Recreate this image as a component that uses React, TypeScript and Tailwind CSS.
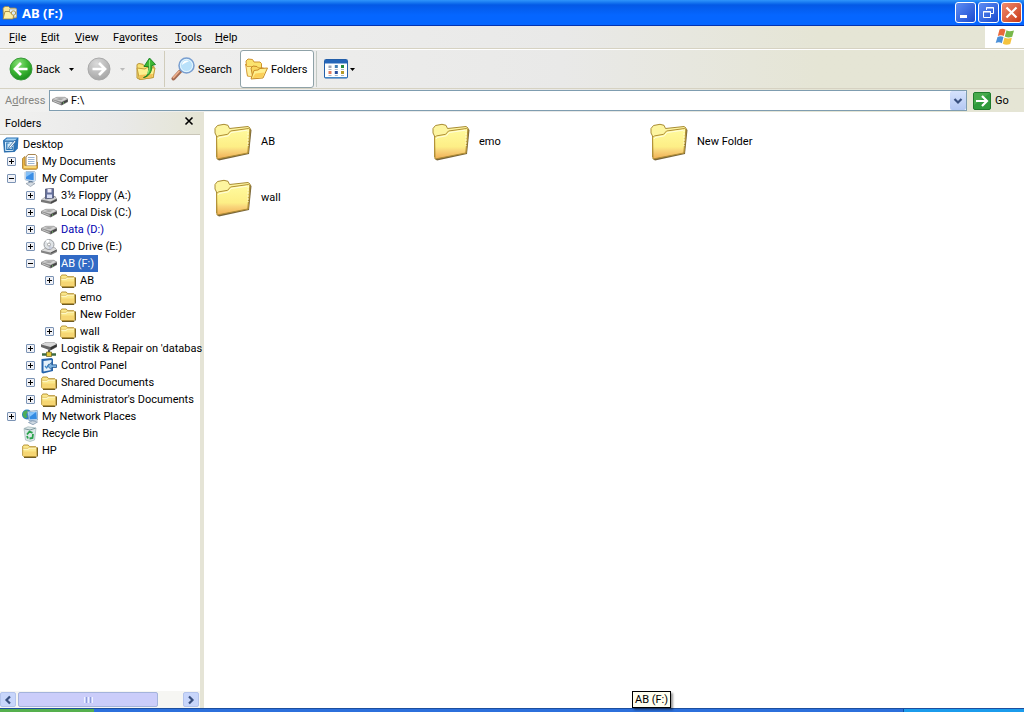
import { useState, type ReactNode } from "react";

type IconProps = { className?: string };

const SmallFolder = () => (
  <svg viewBox="0 0 16 16" className="size-4 shrink-0">
    <path d="M15.500 4.500V13l-1.500 1.500H2" fill="none" stroke="#6f5c24" />
    <path d="M.700 12.500V3.200L1.900 2h4.300l1.400 1.700h6.200l1 1V12.500l-1 1H1.700z" fill="#fbe88c" stroke="#b08a28" strokeWidth=".9" />
    <path d="M1.200 8.500h13v4l-.7.600H1.900l-.7-.6z" fill="#f3cf68" opacity=".7" />
    <path d="M1.300 6.200h4.700l1.500-1.200h6.500" fill="none" stroke="#fffcd6" strokeWidth="1.100" />
    <path d="M1.300 5.300h4.500l1.500-1h6.500" fill="none" stroke="#c8a040" strokeWidth=".5" />
  </svg>
);

const LargeFolder = () => (
  <svg viewBox="0 0 38 38" className="size-[38px] shrink-0">
    <defs>
      <linearGradient id="lf" x1="0" y1="0" x2="0" y2="1">
        <stop offset="0" stopColor="#fffb9e" />
        <stop offset=".6" stopColor="#fdee86" />
        <stop offset=".72" stopColor="#f9d77c" />
        <stop offset="1" stopColor="#f0ae54" />
      </linearGradient>
    </defs>
    <path d="M36 5.500 37.500 7 35 31 5 37.500 3 36z" fill="#77643a" />
    <path d="M2.500 34V13L1 10V5.500L3.500 2.500 10 1.300l4 1L15.500 5.500 34 3.500l2 1.500v4L34 30z" fill="#fdf5a0" stroke="#a98c34" />
    <path d="M3 36 2.600 14.500l2-1.600 9-1.600L16.500 8l18-2.500 1.300 1.200L33.800 30z" fill="url(#lf)" stroke="#b08e36" />
    <path d="M4 16l1-1.500 9.500-1.700L17 9.500l16-2.300" fill="none" stroke="#fffde0" />
    <path d="M34 7v16" stroke="#fffbd0" strokeDasharray="2 1" />
  </svg>
);

const DriveIcon = () => (
  <svg viewBox="0 0 16 16" className="size-4 shrink-0">
    <path d="M0 6.500 5 4h7.500L16 6v3l-6.500 3.500L0 8.500z" fill="#858585" />
    <path d="M.3 6.300 5 4.200h7.500L15.700 6 9.500 9z" fill="#d4d4d4" stroke="#999" strokeWidth=".5" />
    <path d="M3 6.300l4-1.200 5 .3-3 1.800z" fill="#a7a7a7" />
    <path d="M9.500 9.500 15.600 6.400V8.600l-6 3.300z" fill="#444" />
    <path d="M1 7.600l7.500 2.900" stroke="#c9c9c9" />
    <path d="M11 10.200l1-.5" stroke="#7de070" />
  </svg>
);

const FloppyIcon = () => (
  <svg viewBox="0 0 16 16" className="size-4 shrink-0">
    <path d="M0 12l5-4h9l2 3v2l-6 3-10-2z" fill="#777" />
    <path d="M.500 11.500 5 8.500h8.500l2 2-6 3z" fill="#d2d2d2" />
    <path d="M10 14l5.500-2.700v1.400L10 15.400z" fill="#444" />
    <path d="M4.500 1 12.500.5v9.500l-8 .8z" fill="#65709b" stroke="#454b67" strokeWidth=".7" />
    <path d="M6.500 1h4v3.500h-4z" fill="#ece9f7" />
    <path d="M6 6.500h5V10H6z" fill="#d8def5" />
  </svg>
);

const CdIcon = () => (
  <svg viewBox="0 0 16 16" className="size-4 shrink-0">
    <path d="M0 11.500 5 8.500h9l2 2.500v2l-6 3-10-2.500z" fill="#848484" />
    <path d="M.500 11.500 5 9h8.500l2 1.500-6 3z" fill="#dcdcdc" />
    <circle cx="8" cy="5.500" r="5" fill="#dfe3e6" stroke="#85898f" strokeWidth=".8" />
    <path d="M8 5.500 4.500 2A5 5 0 0 1 8 .8z" fill="#fff" />
    <path d="M8 5.500 11.500 9A5 5 0 0 1 8 10z" fill="#c8cddd" />
    <circle cx="8" cy="5.500" r="1.500" fill="#fff" stroke="#888" strokeWidth=".7" />
    <path d="M10 14l5.500-2.700" stroke="#4c4c4c" />
  </svg>
);

const NetDriveIcon = () => (
  <svg viewBox="0 0 16 16" className="size-4 shrink-0">
    <path d="M0 3.500 5 1h7.500L16 3v3l-6.500 3.500L0 6z" fill="#666" />
    <path d="M.3 3.500 5 1.300h7.500L15.700 3 9.500 6z" fill="#d9d9d9" />
    <path d="M9.500 6.500 15.600 3.400v2.200l-6 3.300z" fill="#333" />
    <path d="M8 9v3" stroke="#555" strokeWidth="2" />
    <path d="M1 13.500h14" stroke="#3e6b42" strokeWidth="2.500" />
    <path d="M5.500 11h5v4.500h-5z" fill="#e3c93a" stroke="#6b6224" strokeWidth=".7" />
  </svg>
);

const DesktopIcon = () => (
  <svg viewBox="0 0 16 16" className="size-4 shrink-0">
    <path d="M0 3.500 3.500.500h12L14.800 11.500 11.500 15 1 15.500z" fill="#2b74b8" />
    <path d="M1.300 4.300h10l-.5 10-9 .3z" fill="#d3ebfb" stroke="#2a6caa" />
    <path d="M1.500 3.500 4 1.500h10L12 3.500z" fill="#a6d3f2" />
    <path d="M6.500 6H3.800v6.500h5.500V10" fill="none" stroke="#2673b6" strokeWidth="1.200" />
    <path d="M6 10l5.500-6.500 1.500 1L7.500 11 5.500 11.500z" fill="#fff" stroke="#23619b" strokeWidth=".8" />
  </svg>
);

const DocumentsIcon = () => (
  <svg viewBox="0 0 16 16" className="size-4 shrink-0">
    <path d="M.500 4.500 3 2.500V11h10l2.500-3V14l-1 1.300H1.500l-1-1z" fill="#e9b444" stroke="#a87b25" strokeWidth=".8" />
    <path d="M4 3 6 .500h7.500l1.300 1.500V11l-1 1H4z" fill="#fff" stroke="#a78551" />
    <path d="M6 3.500h6.500M6 5.500h6.500M6 7.500h6.500M6 9.500h6.500" stroke="#9db5d4" />
    <path d="M2 13h12" stroke="#ffe58a" strokeWidth="1.500" />
  </svg>
);

const ComputerIcon = () => (
  <svg viewBox="0 0 16 16" className="size-4 shrink-0">
    <path d="M3 1.500 4 .500h8.500l.8 1V9.500l-1 1-8-1.200L3 8.500z" fill="#e3edf7" stroke="#8da9c7" strokeWidth=".7" />
    <path d="M4 1.500h7.700v7.700L4 8.300z" fill="#3b8ee6" />
    <path d="M4 1.500h7L4 6z" fill="#83c0f7" />
    <path d="M6.500 10h4v2h-4z" fill="#5d7898" />
    <path d="M4 12.500 9 11l4 1.500-4.500 3z" fill="#d4dbe2" stroke="#8c9aa9" strokeWidth=".7" />
  </svg>
);

const ControlPanelIcon = () => (
  <svg viewBox="0 0 16 16" className="size-4 shrink-0">
    <path d="M.500 1 10.500 0 12 1v12L2 15.500l-1.500-1z" fill="#2563ab" />
    <path d="M2.500 3 10.500 2v10L2.500 13.500z" fill="#e4f0fa" />
    <path d="M4 8l1.700 2 2.300-4" fill="none" stroke="#3c87ca" strokeWidth="1.300" />
    <path d="M6.500 8l4-3.500.3 2.300H15.500V9.500h-4.700l-.3 2.300z" fill="#7eb4e2" stroke="#24578f" strokeWidth=".8" />
  </svg>
);

const NetworkIcon = () => (
  <svg viewBox="0 0 16 16" className="size-4 shrink-0">
    <circle cx="5" cy="5.500" r="5" fill="#2c83c8" />
    <path d="M1.500 2.500 5 1l1.500 2L4 5.500 5.500 8 3 9.500.500 6z" fill="#4cae59" />
    <path d="M5.500 2.500 15.300 1.500l.5 9.500-8.800.7z" fill="#dceaf7" stroke="#6c8eb0" strokeWidth=".7" />
    <path d="M6.700 3.500l7.700-.8.500 7.300-7.200.6z" fill="#348ce3" />
    <path d="M6.700 3.500l7.700-.8L7.500 8z" fill="#86c5fb" />
    <path d="M6.500 13.500l4-1.700 5 1.200-4.500 2.700z" fill="#cfd9e2" stroke="#7891a9" strokeWidth=".7" />
  </svg>
);

const RecycleIcon = () => (
  <svg viewBox="0 0 16 16" className="size-4 shrink-0">
    <path d="M2 2.500 6 .800l8 1.200L12.500 14 8 15.500 3.500 14z" fill="#dce7e8" stroke="#9fb4b8" strokeWidth=".7" />
    <path d="M2.500 2.800l5.500 1.200 5.500-1.800" fill="none" stroke="#7c979c" />
    <path d="M5 8.500 7.500 5.500l3 1.300M11 8l-.5 4-3 .5M6 12.500 5 10" fill="none" stroke="#29a24a" strokeWidth="1.800" />
  </svg>
);

const TitleFolder = () => (
  <svg viewBox="0 0 16 16" className="size-4 shrink-0">
    <path d="M1 3l2-1.500h3.500L8 3h5.500l1 1v9H1.500z" fill="#f9e79a" stroke="#94844c" strokeWidth=".8" />
    <path d="M7.500 4h7v8h-7z" fill="#e4eef8" stroke="#a4a494" strokeWidth=".7" />
    <path d="M1 14 3 6.500h4.500L8.500 8h3.500L11 14z" fill="#fdf0a7" stroke="#9b7b34" strokeWidth=".8" />
    <circle cx="11.500" cy="8" r="2.200" fill="#d9ecf8" stroke="#b79a4c" />
  </svg>
);

const UpFolder = () => (
  <svg viewBox="0 0 22 24" className="h-6 w-[22px]">
    <path d="M2 7.500l2-1 4 .8 1.500 2L17 8.500l2 1-.5 11L5 22.500 2 21z" fill="#f7e173" stroke="#bb9536" />
    <path d="M2 11l8 1 2-1.500 8 .5-2 9.500L4.500 22.500z" fill="#fdf08e" stroke="#c49c3a" />
    <path d="M4 18l14-1-.8 3L5 22z" fill="#f2bf54" />
    <path d="M8.500 20.500c4-1 5.500-5 5-11H9L14.500 1 20.500 7.500l-3.700 1c.5 6-3 11.300-8.300 12z" fill="#3cb734" stroke="#188022" strokeWidth=".9" />
    <path d="M14.500 3v7c0 3-.8 5-2 7" fill="none" stroke="#8fe37b" strokeWidth="1.100" />
  </svg>
);

const SearchIcon = () => (
  <svg viewBox="0 0 24 24" className="size-6">
    <path d="M2.500 21.500 9 14.500" stroke="#a46b52" strokeWidth="4" strokeLinecap="round" />
    <path d="M2.500 20.500 8 14.500" stroke="#eeb08c" strokeWidth="1.800" strokeLinecap="round" />
    <circle cx="15.500" cy="8.500" r="7.500" fill="#cdeafb" stroke="#7a9fd0" strokeWidth="1.500" />
    <circle cx="15.500" cy="8.500" r="6" fill="#b9e1fa" stroke="#eefaff" strokeWidth=".8" />
    <path d="M11 8a4.500 4.500 0 0 1 7-3.700C15.500 5 12.500 7 11 8z" fill="#fff" />
  </svg>
);

const FoldersIcon = () => (
  <svg viewBox="0 0 24 22" className="h-[22px] w-6">
    <path d="M2 3 4 1l4.500.5L10 4h6l1.500 1.500v9L3.500 18z" fill="#fbe36e" stroke="#d0942e" />
    <path d="M1.500 6l2 12 5 1L12 8.500H3z" fill="#fff09a" stroke="#d0942e" strokeWidth=".8" />
    <path d="M7 10l2-2 4 .5 1.500 1.500h5l.5 2-1.500 7L9 20.500z" fill="#f9d75f" stroke="#c98c28" />
    <path d="M7 21 10 12.500l4-.5 2-1.500 7.500-.5-4.500 10z" fill="#fff08e" stroke="#c98c28" />
    <path d="M8.500 20l3-4.500 9-1-2 4.700z" fill="#fbcf59" />
  </svg>
);

const ViewsIcon = () => (
  <svg viewBox="0 0 24 20" className="h-5 w-6">
    <rect x=".5" y=".5" width="23" height="18.500" rx="1" fill="#fff" stroke="#245fa9" />
    <path d="M1 1h22v3.500H1z" fill="#2565b8" />
    <path d="M1 18.500h22" stroke="#3f86c8" />
    <path d="M4.500 6.500h3V9h-3z" fill="#9ea5b6" />
    <path d="M4.500 12h3v3h-3z" fill="#e07b5e" />
    <path d="M10.800 6h3v3h-3z" fill="#427eb5" />
    <path d="M10.800 12h3v3h-3z" fill="#284d9c" />
    <path d="M17 6h3v3h-3z" fill="#268b3d" />
    <path d="M17 12h3v3h-3z" fill="#b59a28" />
    <path d="M4.500 10.500h3M10.800 10.500h3M17 10.500h3M4.500 16.500h3M10.800 16.500h3M17 16.500h3" stroke="#aab5c4" />
  </svg>
);

const BackIcon = () => (
  <svg viewBox="0 0 24 24" className="size-6">
    <defs>
      <radialGradient id="bk" cx=".4" cy=".25" r=".8">
        <stop offset="0" stopColor="#8ae07a" />
        <stop offset=".5" stopColor="#3fb935" />
        <stop offset="1" stopColor="#168a1b" />
      </radialGradient>
    </defs>
    <circle cx="12" cy="12" r="11" fill="url(#bk)" stroke="#3b9a3c" />
    <path d="M18.500 12H7M12 6 6 12l6 6" fill="none" stroke="#fff" strokeWidth="2.700" />
  </svg>
);

const ForwardIcon = () => (
  <svg viewBox="0 0 24 24" className="size-6">
    <defs>
      <radialGradient id="fw" cx=".4" cy=".25" r=".8">
        <stop offset="0" stopColor="#dadada" />
        <stop offset="1" stopColor="#a3a3a3" />
      </radialGradient>
    </defs>
    <circle cx="12" cy="12" r="11" fill="url(#fw)" stroke="#aaa" />
    <path d="M5.500 12H17M12 6l6 6-6 6" fill="none" stroke="#fff" strokeWidth="2.700" />
  </svg>
);

const GoIcon = () => (
  <svg viewBox="0 0 18 18" className="size-[18px]">
    <rect x=".5" y=".5" width="17" height="17" rx="1.500" fill="#2f9a3c" stroke="#1f7b2c" />
    <path d="M1 1h16L1 13z" fill="#56b657" opacity=".6" />
    <path d="M3 9h11M9 4l5 5-5 5" fill="none" stroke="#fff" strokeWidth="2.200" />
  </svg>
);

const WindowsFlag = () => (
  <svg viewBox="0 0 20 18" className="h-[18px] w-5">
    <path d="M4.500 1.500C6.500.500 8.500.500 10.500 1.800L8.800 8C7 7 5 7 2.800 8z" fill="#e9683a" />
    <path d="M11.500 2.300c2 1.200 4 1.200 7.500.2L17.200 8.700c-2.700 1.100-5 1-7.400-.2z" fill="#78b84a" />
    <path d="M2.500 9C4.500 8 6.700 8 8.500 9l-1.700 6.200C5 14 3 14 .7 15z" fill="#4a8fd8" />
    <path d="M9.500 9.600c2.200 1.200 4.500 1.300 7.400.2L15.200 16c-2.700 1.200-5 1.100-7.400-.3z" fill="#f4c33e" />
  </svg>
);

const Caret = ({ className }: IconProps) => (
  <svg viewBox="0 0 5 3" className={`h-[3px] w-[5px] ${className ?? ""}`}>
    <path d="M0 0h5L2.500 3z" fill="currentColor" />
  </svg>
);

const Chevron = ({ className }: IconProps) => (
  <svg viewBox="0 0 10 10" className={`size-[10px] ${className ?? ""}`}>
    <path d="M1.500 3 5 6.500 8.500 3" fill="none" stroke="#39507f" strokeWidth="2.200" />
  </svg>
);

const MENUS = [
  { key: "F", before: "", after: "ile", width: "w-8" },
  { key: "E", before: "", after: "dit", width: "w-[34px]" },
  { key: "V", before: "", after: "iew", width: "w-[38px]" },
  { key: "a", before: "F", after: "vorites", width: "w-[62px]" },
  { key: "T", before: "", after: "ools", width: "w-10" },
  { key: "H", before: "", after: "elp", width: "w-[38px]" },
];

type Node = {
  label: string;
  level: number;
  icon: ReactNode;
  state?: "plus" | "minus";
  color?: string;
};

const TREE: Node[] = [
  { label: "Desktop", level: 0, icon: <DesktopIcon /> },
  { label: "My Documents", level: 1, icon: <DocumentsIcon />, state: "plus" },
  { label: "My Computer", level: 1, icon: <ComputerIcon />, state: "minus" },
  { label: "3½ Floppy (A:)", level: 2, icon: <FloppyIcon />, state: "plus" },
  { label: "Local Disk (C:)", level: 2, icon: <DriveIcon />, state: "plus" },
  { label: "Data (D:)", level: 2, icon: <DriveIcon />, state: "plus", color: "text-[#0000b0]" },
  { label: "CD Drive (E:)", level: 2, icon: <CdIcon />, state: "plus" },
  { label: "AB (F:)", level: 2, icon: <DriveIcon />, state: "minus" },
  { label: "AB", level: 3, icon: <SmallFolder />, state: "plus" },
  { label: "emo", level: 3, icon: <SmallFolder /> },
  { label: "New Folder", level: 3, icon: <SmallFolder /> },
  { label: "wall", level: 3, icon: <SmallFolder />, state: "plus" },
  { label: "Logistik & Repair on 'databas", level: 2, icon: <NetDriveIcon />, state: "plus" },
  { label: "Control Panel", level: 2, icon: <ControlPanelIcon />, state: "plus" },
  { label: "Shared Documents", level: 2, icon: <SmallFolder />, state: "plus" },
  { label: "Administrator's Documents", level: 2, icon: <SmallFolder />, state: "plus" },
  { label: "My Network Places", level: 1, icon: <NetworkIcon />, state: "plus" },
  { label: "Recycle Bin", level: 1, icon: <RecycleIcon /> },
  { label: "HP", level: 1, icon: <SmallFolder /> },
];

const INDENT = ["pl-[3px]", "pl-[7px]", "pl-[26px]", "pl-[45px]"];

const FILES = ["AB", "emo", "New Folder", "wall"];

const TreeRow = ({
  node,
  selected,
  onSelect,
}: {
  node: Node;
  selected: boolean;
  onSelect: () => void;
}) => (
  <li className={`flex h-[17px] items-center ${INDENT[node.level]}`}>
    {node.level > 0 && (
      <span className="mr-[6px] flex size-[9px] shrink-0">
        {node.state && (
          <button
            aria-label={`${node.state === "plus" ? "Expand" : "Collapse"} ${node.label}`}
            className="size-[9px]"
          >
            <svg viewBox="0 0 9 9" className="size-[9px]">
              <rect x=".5" y=".5" width="8" height="8" rx=".5" fill="#f0f1f6" stroke="#7b93b4" />
              <path d={node.state === "plus" ? "M2 4.500h5M4.500 2v5" : "M2 4.500h5"} stroke="#000" />
            </svg>
          </button>
        )}
      </span>
    )}
    {node.icon}
    <button
      onClick={onSelect}
      className={`ml-[3px] h-[17px] whitespace-nowrap pl-px pt-px leading-4 ${
        selected ? "bg-[#316ac5] pr-1 text-white" : (node.color ?? "text-black")
      }`}
    >
      {node.label}
    </button>
  </li>
);

const TitleBar = () => (
  <header className="flex h-[26px] shrink-0 items-center border-b border-[#0333b0] bg-linear-to-b from-[#2f95fb] via-[#0459e6] via-20% to-[#0566ff] to-60% px-[2px]">
    <TitleFolder />
    <h1 className="ml-1 grow font-['Noto_Sans',sans-serif] text-[13px] font-bold text-white">AB (F:)</h1>
    <div className="flex gap-[2px]">
      <button aria-label="Minimize" className="size-[21px] rounded-[3px] border border-white bg-linear-to-br from-[#5f8df3] to-[#1a48cf]">
        <svg viewBox="0 0 19 19">
          <path d="M4 13.500h7" stroke="#fff" strokeWidth="3" />
        </svg>
      </button>
      <button aria-label="Restore" className="size-[21px] rounded-[3px] border border-white bg-linear-to-br from-[#5f8df3] to-[#1a48cf]">
        <svg viewBox="0 0 19 19" fill="none" stroke="#fff">
          <path d="M7.500 7V4.500h7v6H12M7 5h8" />
          <path d="M4.500 8.500h7v6h-7zM4 9h8" />
        </svg>
      </button>
      <button aria-label="Close" className="size-[21px] rounded-[3px] border border-white bg-linear-to-br from-[#ef8a6c] to-[#c9360f]">
        <svg viewBox="0 0 19 19">
          <path d="M4.500 4.500l10 10M14.500 4.500l-10 10" stroke="#fff" strokeWidth="2.200" />
        </svg>
      </button>
    </div>
  </header>
);

const MenuBar = () => (
  <nav className="flex h-[23px] shrink-0 border-b border-[#d6d2c2]">
    <div className="flex grow items-center pl-[9px] pt-px">
      {MENUS.map((m) => (
        <button key={m.key} className={`${m.width} text-left`}>
          {m.before}
          <u>{m.key}</u>
          {m.after}
        </button>
      ))}
    </div>
    <div className="flex w-[39px] items-center justify-center bg-white">
      <WindowsFlag />
    </div>
  </nav>
);

const Toolbar = () => (
  <div className="flex h-10 shrink-0 items-center border-b border-t border-b-[#d6d2c2] border-t-white pl-[9px]">
    <button className="flex items-center">
      <BackIcon />
      <span className="ml-[3px] w-6 pt-px">Back</span>
    </button>
    <button aria-label="Back history" className="ml-2 p-px">
      <Caret />
    </button>
    <button aria-label="Forward" className="ml-3">
      <ForwardIcon />
    </button>
    <button aria-label="Forward history" className="ml-2 p-px text-[#bbb]">
      <Caret />
    </button>
    <button aria-label="Up" className="ml-[9px]">
      <UpFolder />
    </button>
    <span className="ml-[7px] h-9 w-px bg-[#d0ccbb]" />
    <button className="ml-[6px] flex items-center">
      <SearchIcon />
      <span className="ml-[3px] w-[34px] pt-px">Search</span>
    </button>
    <button className="ml-2 flex h-[38px] w-[74px] items-center rounded-[3px] border border-[#8fa2a8] bg-white pl-[3px]">
      <FoldersIcon />
      <span className="ml-[3px] pt-[2px]">Folders</span>
    </button>
    <span className="ml-[2px] h-9 w-px bg-[#c3cac4]" />
    <button aria-label="Views" className="ml-[7px] flex items-center gap-[2px]">
      <ViewsIcon />
      <Caret />
    </button>
  </div>
);

const AddressBar = () => (
  <form className="flex h-[23px] shrink-0 items-center" onSubmit={(e) => e.preventDefault()}>
    <label htmlFor="address" className="w-[49px] pl-[5px] pt-px text-[#858580]">
      A<u>d</u>dress
    </label>
    <div className="flex h-[21px] grow items-center border border-[#7f9db0] bg-white pl-[2px]">
      <DriveIcon />
      <input id="address" defaultValue="F:\" className="ml-[3px] min-w-0 grow pt-px outline-none" />
      <button
        type="button"
        aria-label="Show addresses"
        className="flex h-[19px] w-4 items-center justify-center rounded-[2px] bg-linear-to-b from-[#d6e2fc] to-[#b4c8f3]"
      >
        <Chevron />
      </button>
    </div>
    <button className="flex w-[57px] items-center gap-1 pl-[6px]">
      <GoIcon />
      <span className="pt-px">Go</span>
    </button>
  </form>
);

export default function App() {
  const [selected, setSelected] = useState("AB (F:)-2");

  return (
    <div className="relative flex h-screen flex-col overflow-hidden bg-linear-to-r from-[#f1f1f0] via-[#e9e9e8] via-55% to-[#e5e5d5] to-80% font-['Tahoma','Roboto','Liberation_Sans',sans-serif] text-[11px] leading-[14px] text-black">
      <TitleBar />
      <MenuBar />
      <Toolbar />
      <AddressBar />
      <div className="flex min-h-0 grow">
        <aside className="z-10 flex w-[200px] shrink-0 flex-col bg-white">
          <div className="flex h-[23px] shrink-0 items-center justify-between border-b border-[#c9c6b8] bg-linear-to-r from-[#f1f1f0] via-[#e9e9e8] via-60% to-[#e5e5d5] pl-[5px] pr-[6px]">
            <h2 className="pt-[2px]">Folders</h2>
            <button aria-label="Close folders" className="mb-[5px]">
              <svg viewBox="0 0 10 10" className="size-[10px]">
                <path d="M1.500 1.500l7 7M8.500 1.500l-7 7" stroke="#000" strokeWidth="1.600" />
              </svg>
            </button>
          </div>
          <ul className="min-h-0 grow pt-px">
            {TREE.map((node) => {
              const id = `${node.label}-${node.level}`;
              return (
                <TreeRow
                  key={id}
                  node={node}
                  selected={selected === id}
                  onSelect={() => setSelected(id)}
                />
              );
            })}
          </ul>
          <div className="flex h-[17px] shrink-0 items-center bg-[#f6f6f3] pr-px">
            <button aria-label="Scroll left" className="flex h-[15px] w-4 items-center justify-center rounded-[2px] border border-[#b4c4ec] bg-[#c8d6fb]">
              <Chevron className="rotate-90" />
            </button>
            <div className="flex h-[15px] grow px-[2px]">
              <div className="flex w-[86%] items-center justify-center gap-px rounded-[2px] border border-[#a4b3dc] bg-[#cbcdfa]">
                <span className="h-[6px] w-px bg-[#eef4fe]" />
                <span className="h-[6px] w-px bg-[#8ca0dc]" />
                <span className="h-[6px] w-px bg-[#eef4fe]" />
                <span className="h-[6px] w-px bg-[#8ca0dc]" />
                <span className="h-[6px] w-px bg-[#eef4fe]" />
              </div>
            </div>
            <button aria-label="Scroll right" className="flex h-[15px] w-4 items-center justify-center rounded-[2px] border border-[#b4c4ec] bg-[#c8d6fb]">
              <Chevron className="-rotate-90" />
            </button>
          </div>
        </aside>
        <div className="w-1 shrink-0 bg-[#e5e4d6]" />
        <main className="grow bg-white pl-[10px] pt-[11px]">
          <ul className="grid grid-cols-[repeat(auto-fill,218px)] gap-y-[18px]">
            {FILES.map((name) => (
              <li key={name}>
                <button className="flex items-center gap-[9px]">
                  <LargeFolder />
                  <span>{name}</span>
                </button>
              </li>
            ))}
          </ul>
        </main>
      </div>
      <footer className="flex h-1 shrink-0 border-t border-[#1d4f9f] bg-[#2c70dc]">
        <div className="w-[94px] bg-[#55b04e]" />
        <div className="grow" />
        <div className="w-[121px] border-l border-[#0b4fa5] bg-[#1b9cec]" />
      </footer>
      <div
        role="tooltip"
        className="absolute bottom-1 left-[632px] border border-black bg-[#fffff0] px-[2px] leading-[15px] shadow-[2px_2px_2px_rgba(0,0,0,0.4)]"
      >
        AB (F:)
      </div>
    </div>
  );
}
